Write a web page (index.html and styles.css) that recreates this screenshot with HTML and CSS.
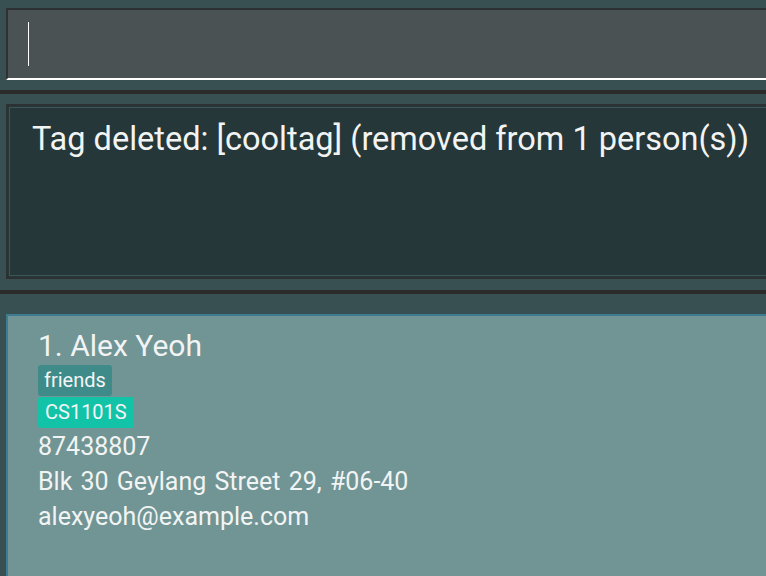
FILE: index.html
```html
<!DOCTYPE html>
<html>
<head>
<meta charset="utf-8">
<link rel="stylesheet" href="styles.css">
</head>
<body>
<div class="app">
  <div class="cmd-wrap">
    <div class="cmd-box"><span class="caret"></span></div>
  </div>
  <div class="divider"></div>
  <div class="result-wrap">
    <div class="result-box">
      <div class="result-inner">Tag deleted: [cooltag] (removed from 1 person(s))</div>
    </div>
  </div>
  <div class="divider"></div>
  <div class="list-wrap">
    <div class="card">
      <div class="name">1. Alex Yeoh</div>
      <div class="tags">
        <span class="tag tag-friends">friends</span>
        <span class="tag tag-module">CS1101S</span>
      </div>
      <div class="fields">
        <div class="field">87438807</div>
        <div class="field">Blk 30 Geylang Street 29, #06-40</div>
        <div class="field">alexyeoh@example.com</div>
      </div>
    </div>
  </div>
</div>
</body>
</html>
```
FILE: styles.css
```css
html, body {
  margin: 0;
  padding: 0;
  background: #385052;
  width: 766px;
  height: 576px;
  overflow: hidden;
  font-family: Roboto, "Open Sans", sans-serif;
  color: #f2f4f4;
}
.app {
  display: flex;
  flex-direction: column;
  height: 576px;
}
.cmd-wrap {
  padding: 8px 0 10px 6px;
}
.cmd-box {
  height: 68px;
  background: #4a5254;
  border-top: 2px solid #2e3133;
  border-left: 2px solid #2e3133;
  border-bottom: 2px solid #ffffff;
  position: relative;
}
.caret {
  position: absolute;
  left: 20px;
  top: 12px;
  width: 1px;
  height: 44px;
  background: #ffffff;
}
.divider {
  height: 4px;
  background: #2b2b2b;
}
.result-wrap {
  padding: 10px 0 11px 6px;
}
.result-box {
  height: 169px;
  border: 2px solid #2e3133;
  border-right: none;
  padding: 1px 0 1px 1px;
  background: #253739;
}
.result-inner {
  height: 169px;
  box-sizing: border-box;
  border: 1px solid #3d5557;
  border-right: none;
  padding: 12px 0 0 22px;
  background: #253739;
  font-size: 32.5px;
  line-height: 38px;
  white-space: nowrap;
}
.list-wrap {
  flex: 1;
  display: flex;
  flex-direction: column;
  padding: 20px 0 0 6px;
  min-height: 0;
}
.card {
  flex: 1;
  background: #719494;
  border-top: 2px solid #3e7b91;
  border-left: 2px solid #3e7b91;
  padding: 12px 0 0 30px;
}
.name {
  font-size: 30px;
  line-height: 36px;
}
.tags {
  display: flex;
  flex-direction: column;
  align-items: flex-start;
  gap: 1px;
  margin-top: 1px;
}
.tag {
  font-size: 20px;
  line-height: 31px;
  padding: 0 6px;
  border-radius: 3px;
  color: #f4f6f6;
}
.tag-friends {
  background: #3f8b8a;
}
.tag-module {
  background: #12c3a8;
  padding: 0 7px;
}
.fields {
  margin-top: 1px;
}
.field {
  font-size: 25px;
  line-height: 35px;
  word-spacing: 2px;
}
```
